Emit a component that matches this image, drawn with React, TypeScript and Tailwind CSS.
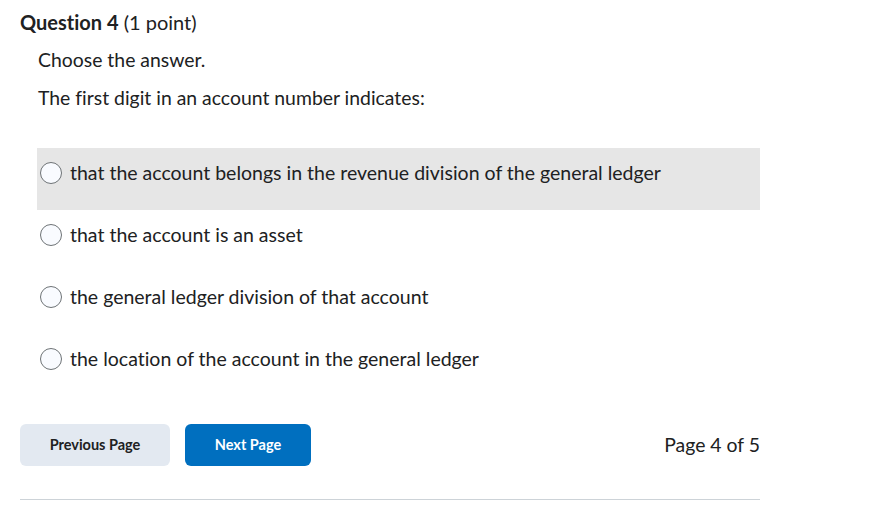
const OPTIONS = [
  "that the account belongs in the revenue division of the general ledger",
  "that the account is an asset",
  "the general ledger division of that account",
  "the location of the account in the general ledger",
];

function Radio() {
  return (
    <span className="inline-block w-[22px] h-[22px] shrink-0 rounded-full border-[1.5px] border-[#6e7376] bg-[#f9fbff]" />
  );
}

export default function App() {
  return (
    <main className="min-h-screen bg-white text-[#202122] font-['Lato','Noto_Sans',sans-serif] [font-variant-ligatures:none]">
      <div className="w-[740px] ml-5 pt-[9px]">
        <h2 className="text-[20px] leading-[26px]">
          <span className="font-bold">Question 4</span> (1 point)
        </h2>

        <div className="pl-[18px] pt-[12px]">
          <p className="text-[19.4px] leading-[26px]">Choose the answer.</p>
          <p className="text-[19.4px] leading-[26px] mt-[12px]">
            The first digit in an account number indicates:
          </p>
        </div>

        {/* Options */}
        <div className="mt-[37px] ml-[17px] flex flex-col">
          {OPTIONS.map((o, i) => (
            <label
              key={o}
              className={
                "h-[62px] flex items-start gap-[8px] pl-[3px] pt-[12px] text-[19.5px] leading-[26px] cursor-pointer " +
                (i === 0 ? "bg-[#e6e6e6]" : "")
              }
            >
              <span className="h-[26px] flex items-center">
                <Radio />
              </span>
              <span>{o}</span>
            </label>
          ))}
        </div>

        {/* Nav */}
        <div className="mt-[28px] flex items-center">
          <button
            type="button"
            className="w-[150px] h-[42px] rounded-[6px] bg-[#e3e9f1] text-[14.5px] font-bold text-[#202122]"
          >
            Previous Page
          </button>
          <button
            type="button"
            className="ml-[15px] w-[126px] h-[42px] rounded-[6px] bg-[#006fbf] text-[14.5px] font-bold text-white"
          >
            Next Page
          </button>
          <span className="ml-auto text-[19.4px]">Page 4 of 5</span>
        </div>

        <div className="mt-[33px] h-px bg-[#cdd3d8]" />
      </div>
    </main>
  );
}
